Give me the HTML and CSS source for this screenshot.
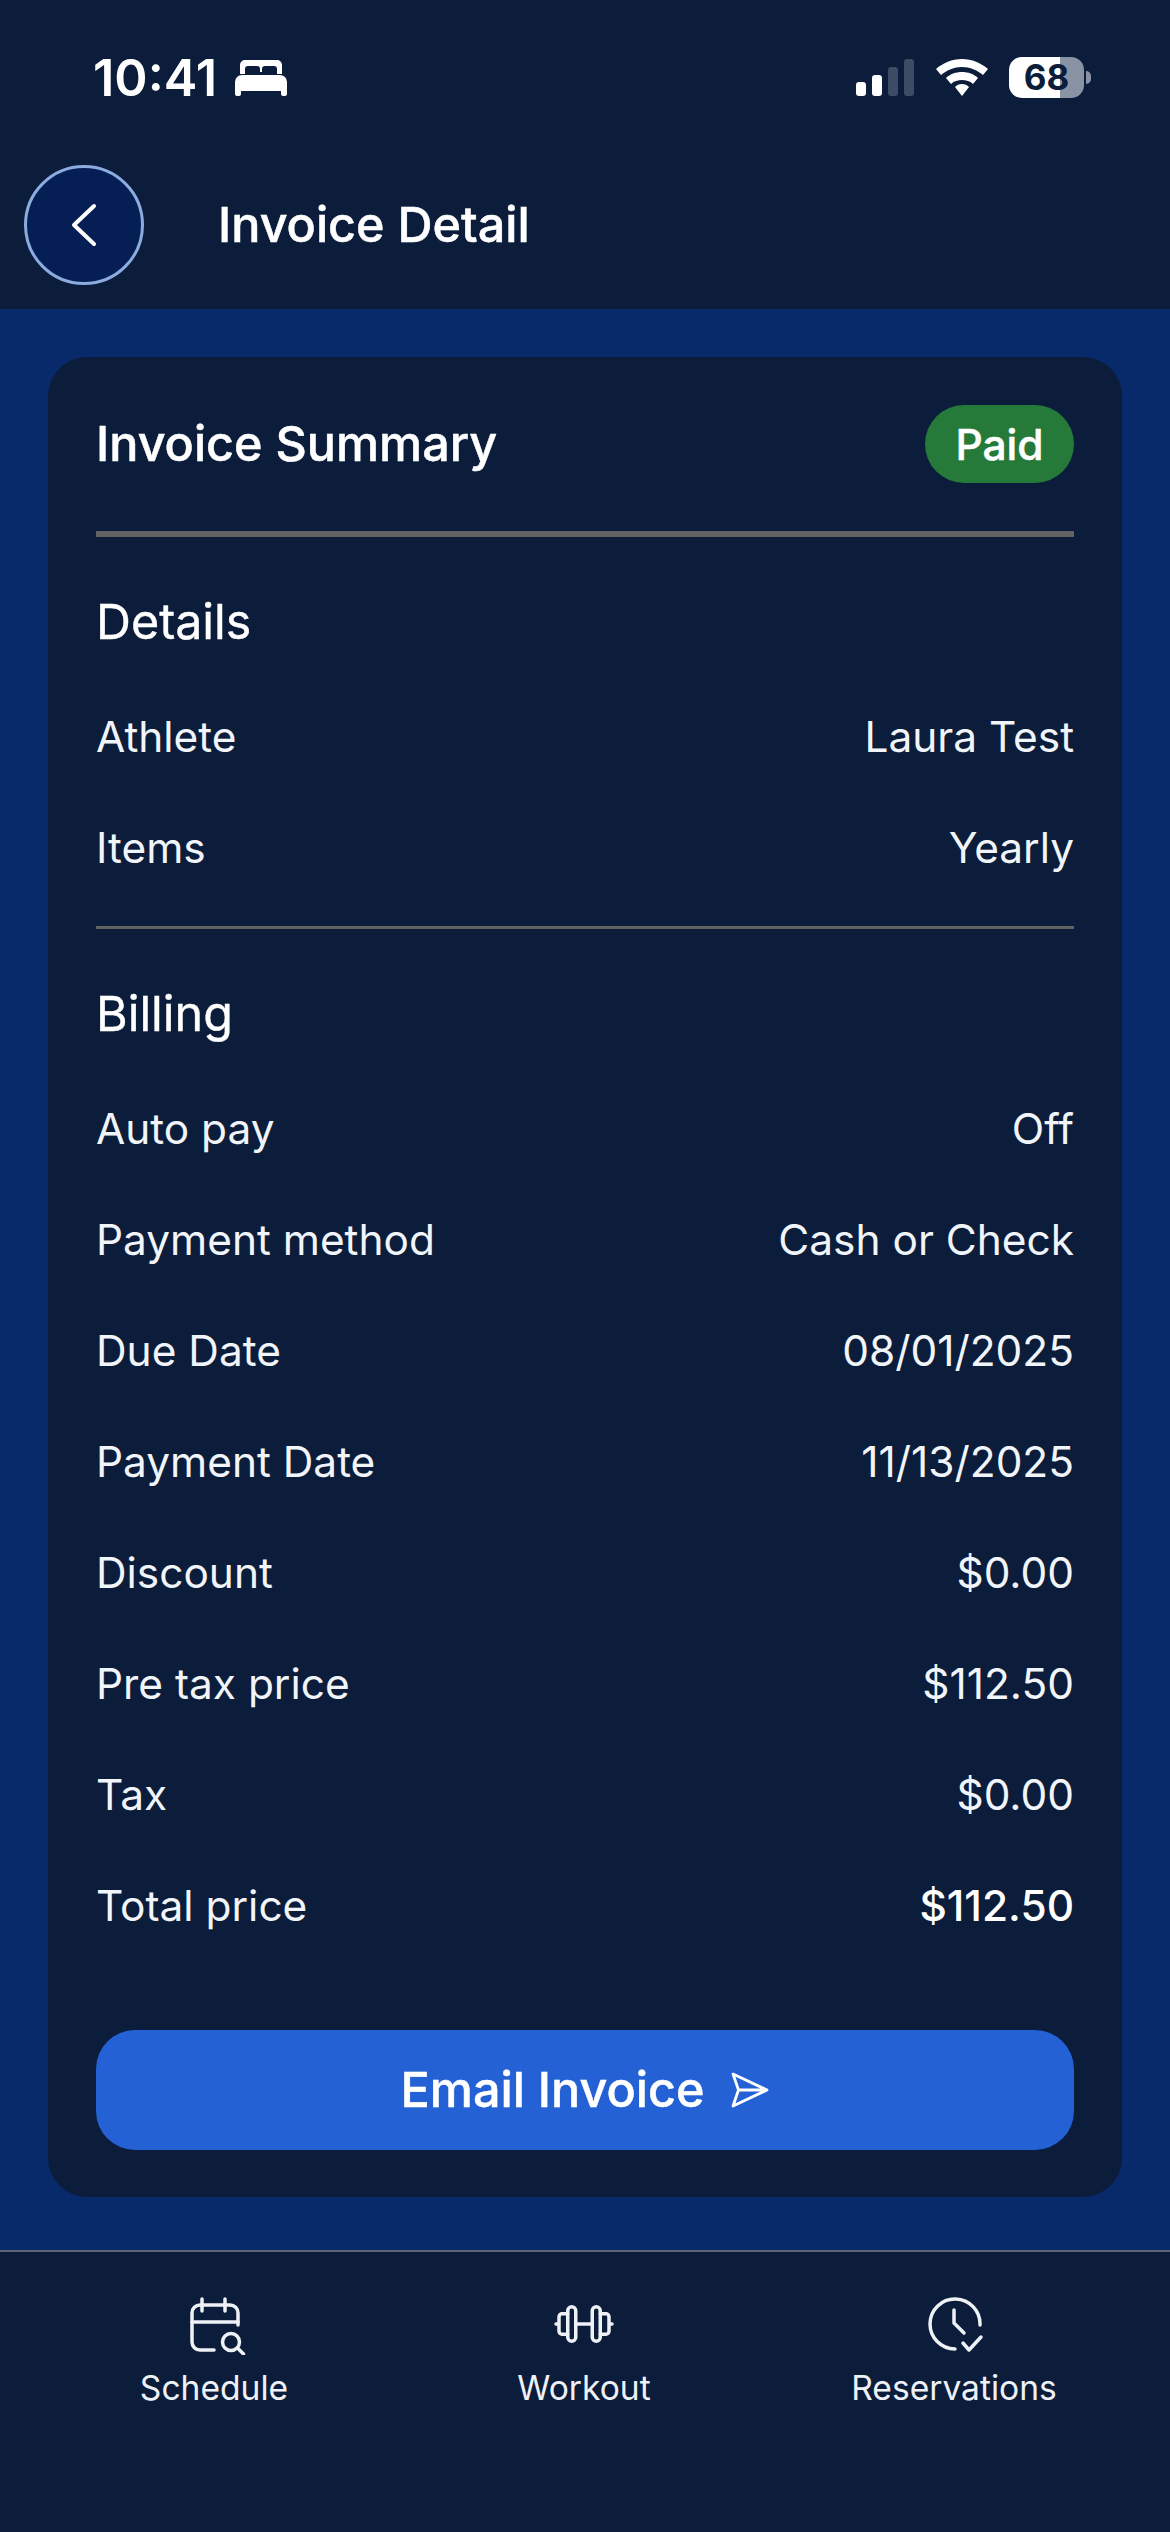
FILE: index.html
```html
<!DOCTYPE html>
<html lang="en">
<head>
<meta charset="utf-8">
<title>Invoice Detail</title>
<link rel="stylesheet" href="styles.css">
</head>
<body>
<div class="app">
  <header class="top">
    <div class="status">
      <div class="status-left">
        <span class="time">10:41</span>
        <svg class="bed" viewBox="0 0 52 36" fill="#fff"><path d="M5 14V5a5 5 0 0 1 5-5h32a5 5 0 0 1 5 5v9h-5V9a3 3 0 0 0-3-3H30a3 3 0 0 0-3 3v3h-2V9a3 3 0 0 0-3-3H13a3 3 0 0 0-3 3v5z"/><path d="M7 15h38a7 7 0 0 1 7 7v12a2 2 0 0 1-2 2h-2a2 2 0 0 1-2-2v-3H6v3a2 2 0 0 1-2 2H2a2 2 0 0 1-2-2V22a7 7 0 0 1 7-7z"/></svg>
      </div>
      <div class="status-right">
        <svg class="signal" viewBox="0 0 58 37"><rect y="23" width="10" height="14" rx="3" fill="#fff"/><rect x="16" y="16" width="10" height="21" rx="3" fill="#fff"/><rect x="32" y="8" width="10" height="29" rx="3" fill="#3d4c64"/><rect x="48" width="10" height="37" rx="3" fill="#3d4c64"/></svg>
        <svg class="wifi" viewBox="0 0 52 37" fill="#fff"><path d="M26 0c10 0 19 4 26 10l-5 6C41 11 34 8 26 8S11 11 5 16L0 10C7 4 16 0 26 0z"/><path d="M26 13c6 0 12 2 16 6l-5 6c-3-3-7-4-11-4s-8 1-11 4l-5-6c4-4 10-6 16-6z"/><path d="M26 25c3 0 5 1 7 3l-7 9-7-9c2-2 4-3 7-3z"/></svg>
        <div class="battery"><div class="cell"><span class="pct">68</span></div><div class="nub"></div></div>
      </div>
    </div>
    <div class="title-row">
      <button class="back" type="button">
        <svg viewBox="0 0 26 44" class="chev"><path d="M23 3 3 22l20 19" fill="none" stroke="#fff" stroke-width="4" stroke-linecap="round" stroke-linejoin="round"/></svg>
      </button>
      <h1 class="title">Invoice Detail</h1>
    </div>
  </header>

  <main class="main">
    <section class="card">
      <div class="card-head">
        <h2 class="card-title">Invoice Summary</h2>
        <span class="pill">Paid</span>
      </div>
      <div class="rule-thick"></div>
      <h3 class="sec">Details</h3>
      <div class="row"><span>Athlete</span><span>Laura Test</span></div>
      <div class="row"><span>Items</span><span>Yearly</span></div>
      <div class="rule-thin"></div>
      <h3 class="sec">Billing</h3>
      <div class="row"><span>Auto pay</span><span>Off</span></div>
      <div class="row"><span>Payment method</span><span>Cash or Check</span></div>
      <div class="row"><span>Due Date</span><span>08/01/2025</span></div>
      <div class="row"><span>Payment Date</span><span>11/13/2025</span></div>
      <div class="row"><span>Discount</span><span>$0.00</span></div>
      <div class="row"><span>Pre tax price</span><span>$112.50</span></div>
      <div class="row"><span>Tax</span><span>$0.00</span></div>
      <div class="row"><span>Total price</span><span class="strong">$112.50</span></div>
      <button class="email" type="button">
        <span>Email Invoice</span>
        <svg class="send" viewBox="0 0 38 36"><path d="M2 2 36 18 2 34 7.500 18zM7.500 18H36" fill="none" stroke="#fff" stroke-width="2.800" stroke-linejoin="round" stroke-linecap="round"/></svg>
      </button>
    </section>
  </main>

  <nav class="tabs">
    <div class="tab">
      <svg class="ico ico-cal" viewBox="0 0 56 58" fill="none" stroke="#eef1f6" stroke-width="3.500" stroke-linecap="round" stroke-linejoin="round"><path d="M24 53H10a8 8 0 0 1-8-8V16a8 8 0 0 1 8-8h30a8 8 0 0 1 8 8v12"/><path d="M2 25h46M12 2v12M35 2v12"/><circle cx="41" cy="45" r="8.500"/><path d="m47.500 51 6 6"/></svg>
      <span>Schedule</span>
    </div>
    <div class="tab">
      <svg class="ico" viewBox="0 0 60 58" fill="none" stroke="#eef1f6" stroke-width="3.500" stroke-linecap="round" stroke-linejoin="round"><rect x="13.750" y="9.750" width="8" height="34.500" rx="4"/><rect x="38.250" y="9.750" width="8" height="34.500" rx="4"/><path d="M21.750 27h16.500M13.750 16.750H8a3 3 0 0 0-3 3v14.500a3 3 0 0 0 3 3h5.750M46.250 16.750H52a3 3 0 0 1 3 3v14.500a3 3 0 0 1-3 3h-5.750M5 27H2M55 27h3"/></svg>
      <span>Workout</span>
    </div>
    <div class="tab">
      <svg class="ico ico-clock" viewBox="0 0 56 58" fill="none" stroke="#eef1f6" stroke-width="3.500" stroke-linecap="round" stroke-linejoin="round"><path d="M27 52A25 25 0 1 1 52 28"/><path d="M26 13v13l10 10"/><path d="m35 46 6 7 12-13"/></svg>
      <span>Reservations</span>
    </div>
  </nav>
</div>
</body>
</html>
```
FILE: styles.css
```css
* { box-sizing: border-box; margin: 0; padding: 0; }
html, body { background: #0b1d3a; }
body { font-family: Inter, "Noto Sans", sans-serif; color: #fff; }
.app { width: 1170px; height: 2532px; display: flex; flex-direction: column; overflow: hidden; }

.top { background: #0b1d3a; height: 309px; flex: none; }
.status { height: 165px; padding: 57px 79px 0 93px; display: flex; justify-content: space-between; align-items: flex-start; }
.status-left { display: flex; align-items: center; gap: 18px; height: 42px; }
.time { font-size: 50.500px; font-weight: 600; line-height: 42px; }
.bed { width: 52px; height: 36px; display: block; }
.status-right { display: flex; align-items: center; height: 41px; }
.signal { width: 58px; height: 37px; display: block; margin-right: 22px; }
.wifi { width: 52px; height: 37px; display: block; margin-right: 21px; }
.battery { display: flex; align-items: center; gap: 2px; }
.cell { width: 75px; height: 41px; border-radius: 13px; background: linear-gradient(90deg, #fff 0 68%, #8a93a3 68% 100%); display: flex; align-items: center; justify-content: center; }
.pct { color: #0b1d3a; font-size: 35px; font-weight: 700; line-height: 41px; }
.nub { width: 5px; height: 13px; background: #8a93a3; border-radius: 0 5px 5px 0; }

.title-row { display: flex; align-items: center; padding-left: 24px; gap: 74px; height: 120px; }
.back { width: 120px; height: 120px; border-radius: 50%; background: #051f55; border: 3px solid #8cabdf; display: flex; align-items: center; justify-content: center; flex: none; }
.chev { width: 26px; height: 44px; display: block; }
.title { font-size: 48.500px; font-weight: 500; line-height: 60px; -webkit-text-stroke: 0.5px #fff; }

.main { flex: 1; background: #082a6b; padding: 48px; }
.card { background: #0b1d3a; border-radius: 39px; height: 1840px; padding: 48px; display: flex; flex-direction: column; }
.card-head { display: flex; justify-content: space-between; align-items: center; height: 78px; }
.card-title { font-size: 48.500px; font-weight: 500; line-height: 60px; -webkit-text-stroke: 0.5px #fff; }
.pill { width: 149px; height: 78px; border-radius: 39px; background: #267a39; display: flex; align-items: center; justify-content: center; font-size: 42.500px; font-weight: 500; -webkit-text-stroke: 0.5px #fff; }
.rule-thick { height: 6px; background: #636363; margin-top: 48px; flex: none; }
.rule-thin { height: 3px; background: #636363; margin-top: 22px; flex: none; }
.sec { font-size: 48.400px; font-weight: 400; line-height: 60px; margin-top: 55px; margin-bottom: 29.500px; -webkit-text-stroke: 0.4px #fff; }
.row { height: 111px; flex: none; display: flex; justify-content: space-between; align-items: center; font-size: 42.400px; font-weight: 400; line-height: 60px; color: #f1f4f9; }
.strong { font-weight: 500; color: #fff; }
.email { margin-top: 68.500px; height: 120px; flex: none; border: 0; border-radius: 39px; background: #2361d4; color: #fff; font-family: inherit; font-size: 48.500px; font-weight: 500; -webkit-text-stroke: 0.5px #fff; display: flex; align-items: center; justify-content: center; gap: 27px; }
.send { width: 38px; height: 36px; display: block; }

.tabs { height: 282px; flex: none; background: #0b1d3a; border-top: 2px solid #5f6478; display: flex; padding: 45px 29px 0; }
.tab { width: 370px; display: flex; flex-direction: column; align-items: center; font-size: 33.600px; line-height: 40px; color: #eef1f6; gap: 13px; }
.ico { width: 60px; height: 58px; display: block; }
.ico-cal { margin-left: 8px; }
.ico-clock { margin-left: 4px; }
```
